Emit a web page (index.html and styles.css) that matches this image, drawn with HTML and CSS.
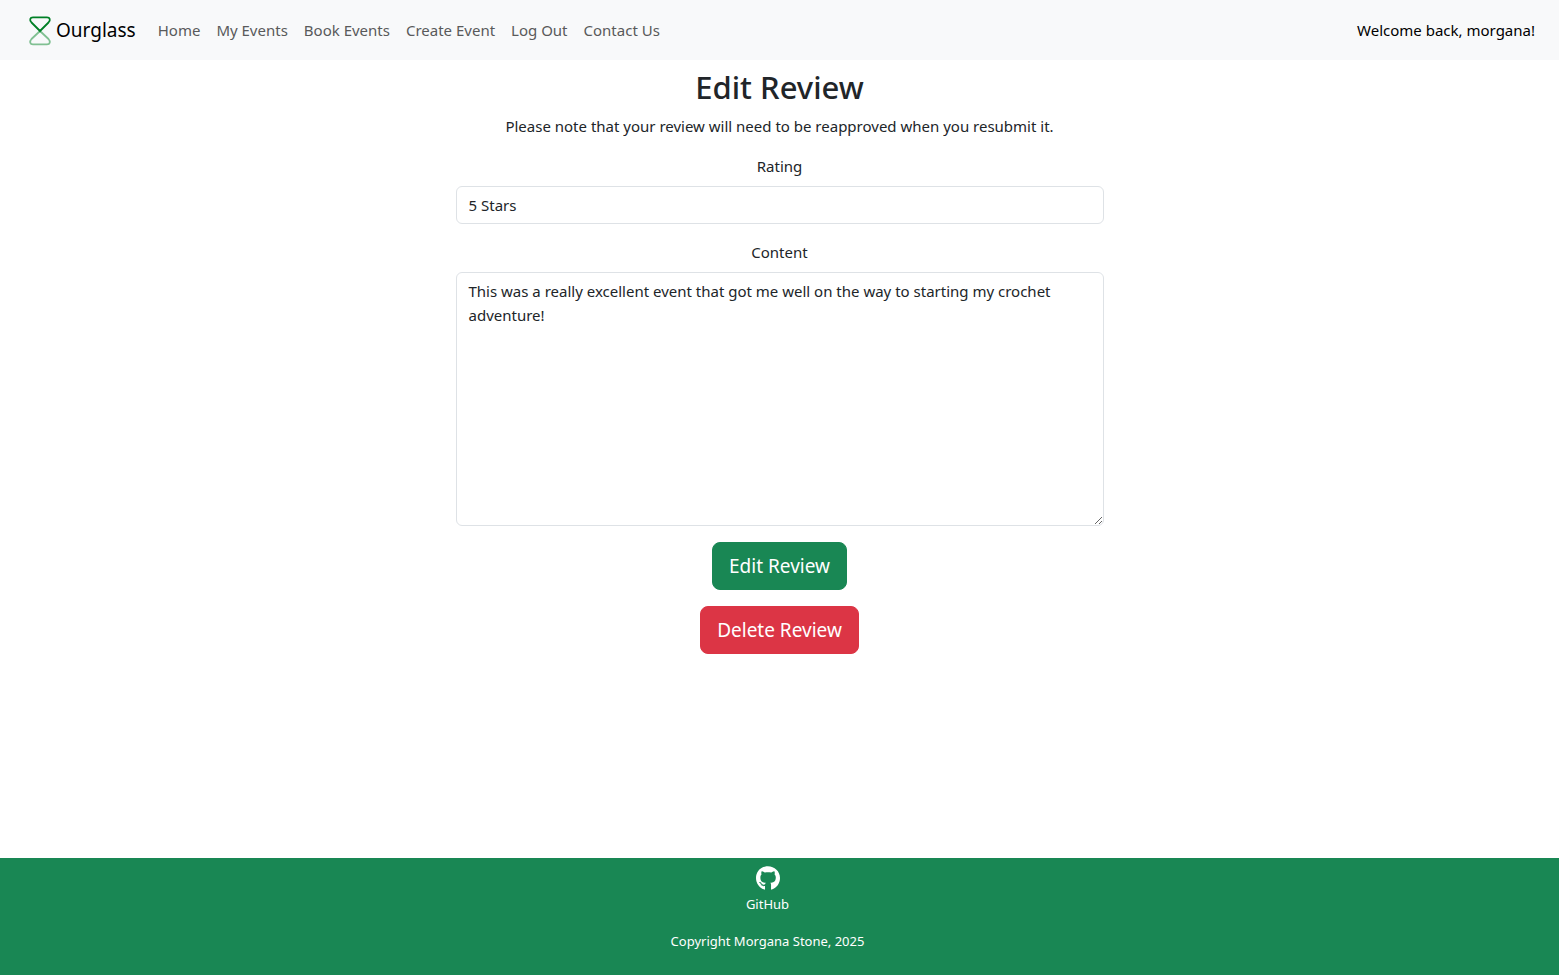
FILE: index.html
```html
<!DOCTYPE html>
<html lang="en">
<head>
<meta charset="utf-8">
<meta name="viewport" content="width=device-width, initial-scale=1">
<title>Ourglass - Edit Review</title>
<link rel="stylesheet" href="styles.css">
</head>
<body>
<header class="navbar">
  <a class="brand" href="#">
    <svg class="brand-logo" viewBox="0 0 32 32" fill="none" stroke-width="1.8" stroke-linejoin="round" aria-hidden="true">
      <path class="logo-bottom" d="M16 17 L7.500 25 C5.200 27.500 6 30.400 9 30.400 H23 C26 30.400 26.800 27.500 24.500 25 Z"/>
      <path class="logo-top" d="M16 17 L7.500 8.500 C5.200 6 6 3.300 9 3.300 H23 C26 3.300 26.800 6 24.500 8.500 Z"/>
    </svg>
    <span>Ourglass</span>
  </a>
  <nav class="nav-links">
    <a href="#">Home</a>
    <a href="#">My Events</a>
    <a href="#">Book Events</a>
    <a href="#">Create Event</a>
    <a href="#">Log Out</a>
    <a href="#">Contact Us</a>
  </nav>
  <span class="welcome">Welcome back, morgana!</span>
</header>
<main class="content">
  <h1>Edit Review</h1>
  <p class="note">Please note that your review will need to be reapproved when you resubmit it.</p>
  <form class="review-form">
    <label for="rating">Rating</label>
    <select id="rating" class="control">
      <option>5 Stars</option>
    </select>
    <label for="review">Content</label>
    <textarea id="review" class="control" rows="10">This was a really excellent event that got me well on the way to starting my crochet adventure!</textarea>
    <button type="submit" class="btn btn-success">Edit Review</button>
    <button type="button" class="btn btn-danger">Delete Review</button>
  </form>
</main>
<footer class="footer">
  <a class="github" href="#">
    <svg class="github-logo" viewBox="0 8 496 486" fill="currentColor" aria-hidden="true"><path d="M244.800 8C106.100 8 0 113.300 0 252c0 110.900 69.800 205.800 169.500 239.200 12.800 2.300 17.300-5.600 17.300-12.100 0-6.200-.3-40.400-.3-61.400 0 0-70 15-84.700-29.800 0 0-11.400-29.100-27.800-36.600 0 0-22.900-15.700 1.600-15.400 0 0 24.900 2 38.600 25.800 21.900 38.600 58.600 27.500 72.900 20.900 2.300-16 8.800-27.100 16-33.700-55.900-6.200-112.300-14.300-112.300-110.500 0-27.500 7.600-41.300 23.600-58.900-2.600-6.500-11.100-33.300 2.600-67.900 20.900-6.500 69 27 69 27 20-5.600 41.500-8.500 62.800-8.500s42.800 2.900 62.800 8.500c0 0 48.100-33.600 69-27 13.700 34.700 5.200 61.400 2.600 67.900 16 17.700 25.800 31.500 25.800 58.900 0 96.500-58.900 104.200-114.800 110.500 9.200 7.900 17 22.900 17 46.400 0 33.700-.3 75.400-.3 83.600 0 6.500 4.600 14.400 17.300 12.100C428.200 457.800 496 362.900 496 252 496 113.300 383.500 8 244.800 8z"/><path d="M97 353l8 2 4 8-8 1zM115 371l10 5 3 10-9-3zM134 394l12 2 5 9-12-1z"/></svg>
    <span>GitHub</span>
  </a>
  <p>Copyright Morgana Stone, 2025</p>
</footer>
</body>
</html>
```
FILE: styles.css
```css
* { box-sizing: border-box; }
body {
  margin: 0;
  min-height: 100vh;
  display: flex;
  flex-direction: column;
  font-family: "Segoe UI", "Noto Sans", sans-serif;
  font-size: 15px;
  line-height: 24px;
  color: #212529;
  background: #fff;
}
.navbar {
  display: flex;
  align-items: center;
  min-height: 60px;
  padding: 0 24px;
  background: #f8f9fa;
}
.brand {
  display: flex;
  align-items: center;
  margin-right: 14px;
  color: #000;
  font-size: 19px;
  text-decoration: none;
}
.brand-logo { width: 32px; height: 32px; }
.logo-top { stroke: #008026; }
.logo-bottom { stroke: #80c092; }
.nav-links { display: flex; flex: 1; }
.nav-links a {
  padding: 8px;
  color: #595a5b;
  text-decoration: none;
}
.welcome { color: #000; }
.content { flex: 1; padding: 8px 24px; text-align: center; }
h1 {
  margin: 0 0 8px;
  font-size: 31px;
  font-weight: 500;
  line-height: 38px;
}
.note { margin: 0 0 16px; }
.review-form {
  display: flex;
  flex-direction: column;
  align-items: center;
  width: 43%;
  max-width: 648px;
  min-width: 280px;
  margin: 0 auto;
}
.review-form label { margin-bottom: 8px; }
.control {
  appearance: none;
  display: block;
  width: 100%;
  margin: 0 0 16px;
  padding: 6px 12px;
  border: 1px solid #dee2e6;
  border-radius: 6px;
  background: #fff;
  color: #212529;
  font: inherit;
}
textarea.control { resize: vertical; }
.btn {
  margin-bottom: 16px;
  padding: 8px 16px;
  border: 1px solid;
  border-radius: 8px;
  color: #fff;
  font: inherit;
  font-size: 19px;
  line-height: 30px;
  cursor: pointer;
}
.btn-success { background: #198754; border-color: #198754; }
.btn-danger { background: #dc3545; border-color: #dc3545; }
.footer {
  display: flex;
  flex-direction: column;
  align-items: center;
  padding: 8px 24px 22px 0;
  background: #198754;
  color: #fff;
  font-size: 13px;
  text-align: center;
}
.github {
  display: flex;
  flex-direction: column;
  align-items: center;
  gap: 2px;
  color: #fff;
  text-decoration: none;
}
.github-logo { width: 24px; height: 24px; }
.footer p { margin: 13px 0 0; }
```
